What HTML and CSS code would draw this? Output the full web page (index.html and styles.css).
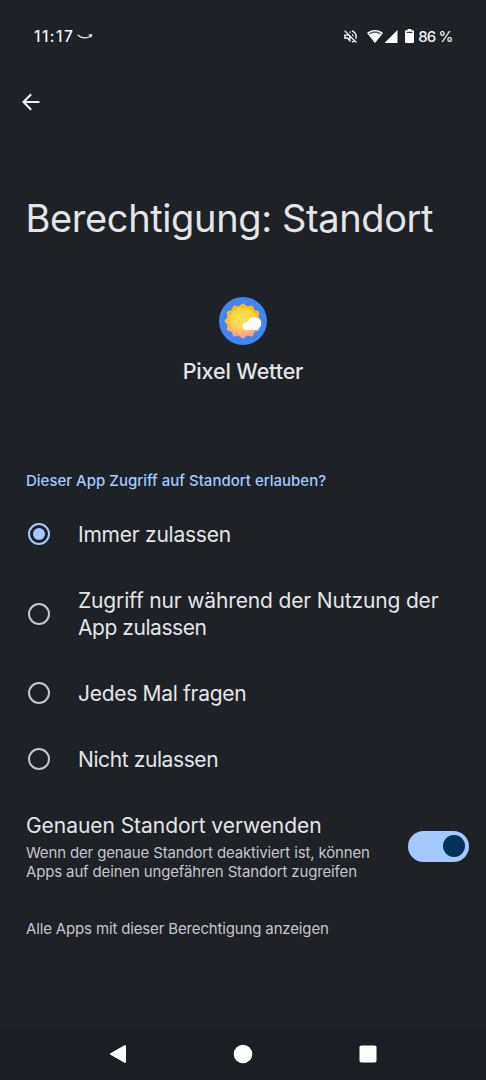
FILE: index.html
```html
<!DOCTYPE html>
<html lang="de">
<head>
<meta charset="utf-8">
<title>Berechtigung: Standort</title>
<link rel="stylesheet" href="styles.css">
</head>
<body>
<div class="screen">
  <header class="status">
    <span class="clock">11:17</span>
    <svg class="smile" width="16" height="8" viewBox="0 0 16 8" fill="none" stroke="#eef0f3" stroke-width="1.2" stroke-linecap="round"><path d="M1 3.200C4.500 6.500 10 6.600 13.300 4.200M12.200 2.900l2.300-.1-.6 2.200"/></svg>
    <div class="indicators">
      <svg class="mute" width="17" height="17" viewBox="0 0 24 24" fill="#f1f3f5"><path d="M4.300 3 3 4.300 7.700 9H3v6h4l5 5v-6.700l4.200 4.200c-.7.500-1.400.9-2.200 1.200v2.100c1.400-.3 2.600-.9 3.700-1.800L19.700 21 21 19.700zM10 15.200 7.800 13H5v-2h4.700l.3.300zM19 12c0 .9-.2 1.800-.5 2.600l1.500 1.500c.6-1.200 1-2.600 1-4.100 0-4.300-3-7.900-7-8.800v2.100c2.900.9 5 3.500 5 6.700zM12 4l-2 2 2 2zM16.500 12c0-1.800-1-3.300-2.500-4v2.200l2.500 2.400z"/></svg>
      <svg class="wifi" width="16" height="13" viewBox="0 0 16 13"><path fill="#fff" d="M8 0C4.900 0 2.200 1.200 0 3l8 10 8-10C13.800 1.200 11.100 0 8 0"/><path d="M2.400 3.900C5.800 1.600 10.200 1.600 13.600 3.900" fill="none" stroke="#5b5e62" stroke-width="1.300"/></svg>
      <svg class="cell" width="14" height="13" viewBox="0 0 14 13"><path fill="#fff" d="M13.500 0v13H.5z"/></svg>
      <svg class="battery" width="9" height="14" viewBox="0 0 9 14"><path fill="#fff" d="M2.700 0h3.600v1.300H8q1 0 1 1V13q0 1-1 1H1q-1 0-1-1V2.300q0-1 1-1h1.700z"/><path d="M1.500 3.400h6" stroke="#34373b" stroke-width="1.200"/></svg>
      <span class="percent">86 %</span>
    </div>
  </header>
  <div class="toolbar">
    <svg width="18" height="18" viewBox="0 0 18 18" fill="none" stroke="#eceef1" stroke-width="2.100"><path d="M17.500 9H2M9.200 1.200 1.500 9l7.700 7.800"/></svg>
  </div>
  <h1 class="title">Berechtigung: Standort</h1>
  <section class="app">
    <svg class="app-icon" width="48" height="48" viewBox="0 0 48 48">
      <defs>
        <linearGradient id="rays" x1="0" y1="0" x2="0" y2="1"><stop offset="0" stop-color="#fbbc04"/><stop offset=".55" stop-color="#fcc236"/><stop offset=".85" stop-color="#ffa287"/><stop offset="1" stop-color="#ff9a8c"/></linearGradient>
        <linearGradient id="disc" x1="0" y1="0" x2="0" y2="1"><stop offset="0" stop-color="#fdd835"/><stop offset=".6" stop-color="#fdd34a"/><stop offset="1" stop-color="#ffb674"/></linearGradient>
      </defs>
      <circle cx="24" cy="24" r="24" fill="#4285f4"/>
      <path fill="url(#rays)" stroke="url(#rays)" stroke-width="3" stroke-linejoin="round" d="M24 8l4 3 4.500-1.100 1.800 4.400 4.400 1.400-.8 4.700 2.900 3.600-2.900 3.600.8 4.700-4.400 1.400-1.800 4.400-4.500-1.100L24 40l-4-3-4.500 1.100-1.800-4.400-4.400-1.400.8-4.700L7.200 24l2.900-3.600-.8-4.700 4.400-1.400 1.800-4.400L20 11z"/>
      <circle cx="24" cy="24" r="13.500" fill="url(#disc)"/>
      <circle cx="24" cy="24" r="8" fill="#ffe45c" opacity=".65"/>
      <path fill="#fff" d="M27.500 33a3.900 3.900 0 1 1 .7-7.700 7.200 7.200 0 0 1 14 1c0 3.900-2.600 6.700-6.200 6.700z"/>
    </svg>
    <span class="app-name">Pixel Wetter</span>
  </section>
  <h2 class="question">Dieser App Zugriff auf Standort erlauben?</h2>
  <ul class="options">
    <li class="option"><span class="radio checked"></span><span class="label always">Immer zulassen</span></li>
    <li class="option tall"><span class="radio"></span><span class="label in-use">Zugriff nur während der Nutzung der<br><span class="second-line">App zulassen</span></span></li>
    <li class="option"><span class="radio"></span><span class="label ask">Jedes Mal fragen</span></li>
    <li class="option"><span class="radio"></span><span class="label deny">Nicht zulassen</span></li>
  </ul>
  <section class="precise">
    <div class="precise-text">
      <div class="precise-title">Genauen Standort verwenden</div>
      <div class="precise-sub">Wenn der genaue Standort deaktiviert ist, können<br>Apps auf deinen ungefähren Standort zugreifen</div>
    </div>
    <span class="switch"><span class="thumb"></span></span>
  </section>
  <div class="all">Alle Apps mit dieser Berechtigung anzeigen</div>
  <nav class="nav">
    <svg width="18" height="20" viewBox="0 0 18 20"><path fill="#fff" stroke="#fff" stroke-width="2" stroke-linejoin="round" d="M16 2.200v15.600L2 10z"/></svg>
    <svg width="20" height="20" viewBox="0 0 20 20"><circle cx="10" cy="10" r="9.300" fill="#fff"/></svg>
    <svg width="18" height="18" viewBox="0 0 18 18"><rect x=".5" y=".5" width="17" height="17" rx="1.800" fill="#fff"/></svg>
  </nav>
</div>
</body>
</html>
```
FILE: styles.css
```css
* { box-sizing: border-box; }
body { margin: 0; background: #1e2125; color: #e3e5e9; font-family: Inter, "Liberation Sans", sans-serif; }
.screen { width: 486px; height: 1080px; display: flex; flex-direction: column; overflow: hidden; white-space: nowrap; }
.status { height: 72px; padding: 0 34px; display: flex; align-items: center; color: #f1f3f5; font-size: 15px; font-weight: 500; }
.clock { letter-spacing: 1.500px; font-size: 15.500px; }
.smile { margin-left: 3px; }
.indicators { margin-left: auto; display: flex; align-items: center; }
.wifi { margin-left: 8px; }
.cell { margin-left: 1px; }
.battery { margin: 0 4px 0 7px; }
.percent { letter-spacing: -0.900px; margin-right: -0.500px; }
.toolbar { height: 60px; padding-left: 21.500px; display: flex; align-items: center; }
.title { margin: 58px 0 0; padding-left: 25.500px; font-size: 38px; line-height: 56px; font-weight: 400; letter-spacing: -0.380px; }
.app { margin-top: 51px; display: flex; flex-direction: column; align-items: center; }
.app-icon { display: block; }
.app-name { margin-top: 12px; font-size: 21.500px; line-height: 28px; font-weight: 500; letter-spacing: -0.150px; }
.question { margin: 86px 0 0; padding-left: 26px; font-size: 15px; line-height: 20px; font-weight: 500; color: #a3c9ff; }
.options { list-style: none; margin: 10px 0 0; padding: 0 0 0 28px; }
.option { display: flex; align-items: center; height: 66px; }
.option.tall { height: 93px; }
.radio { width: 22px; height: 22px; border: 2px solid #c4c6cf; border-radius: 50%; display: grid; place-items: center; }
.radio.checked { border-color: #a3c9ff; }
.radio.checked::after { content: ""; width: 12px; height: 12px; border-radius: 50%; background: #a3c9ff; }
.label { margin-left: 28px; font-size: 21px; line-height: 27px; }
.always { letter-spacing: -0.240px; }
.in-use { letter-spacing: -0.150px; }
.second-line { letter-spacing: -0.450px; }
.ask { letter-spacing: -0.300px; }
.deny { letter-spacing: -0.400px; }
.precise { padding: 0 17px 0 26px; display: flex; justify-content: space-between; }
.precise-title { margin-top: 20px; font-size: 21px; line-height: 27px; letter-spacing: -0.050px; }
.precise-sub { margin-top: 4px; font-size: 15px; line-height: 19px; letter-spacing: -0.150px; color: #c4c6cf; }
.switch { margin-top: 38.500px; width: 61px; height: 31px; border-radius: 16px; background: #a3c9ff; display: flex; align-items: center; justify-content: flex-end; padding-right: 4.500px; }
.thumb { width: 22px; height: 22px; border-radius: 50%; background: #00325a; }
.all { margin-top: 37px; padding-left: 26px; font-size: 15px; line-height: 22px; letter-spacing: -0.150px; color: #c4c6cf; }
.nav { margin-top: auto; height: 52px; flex: none; background: #1b1e22; display: flex; align-items: center; justify-content: space-between; padding: 0 109px; }
```
